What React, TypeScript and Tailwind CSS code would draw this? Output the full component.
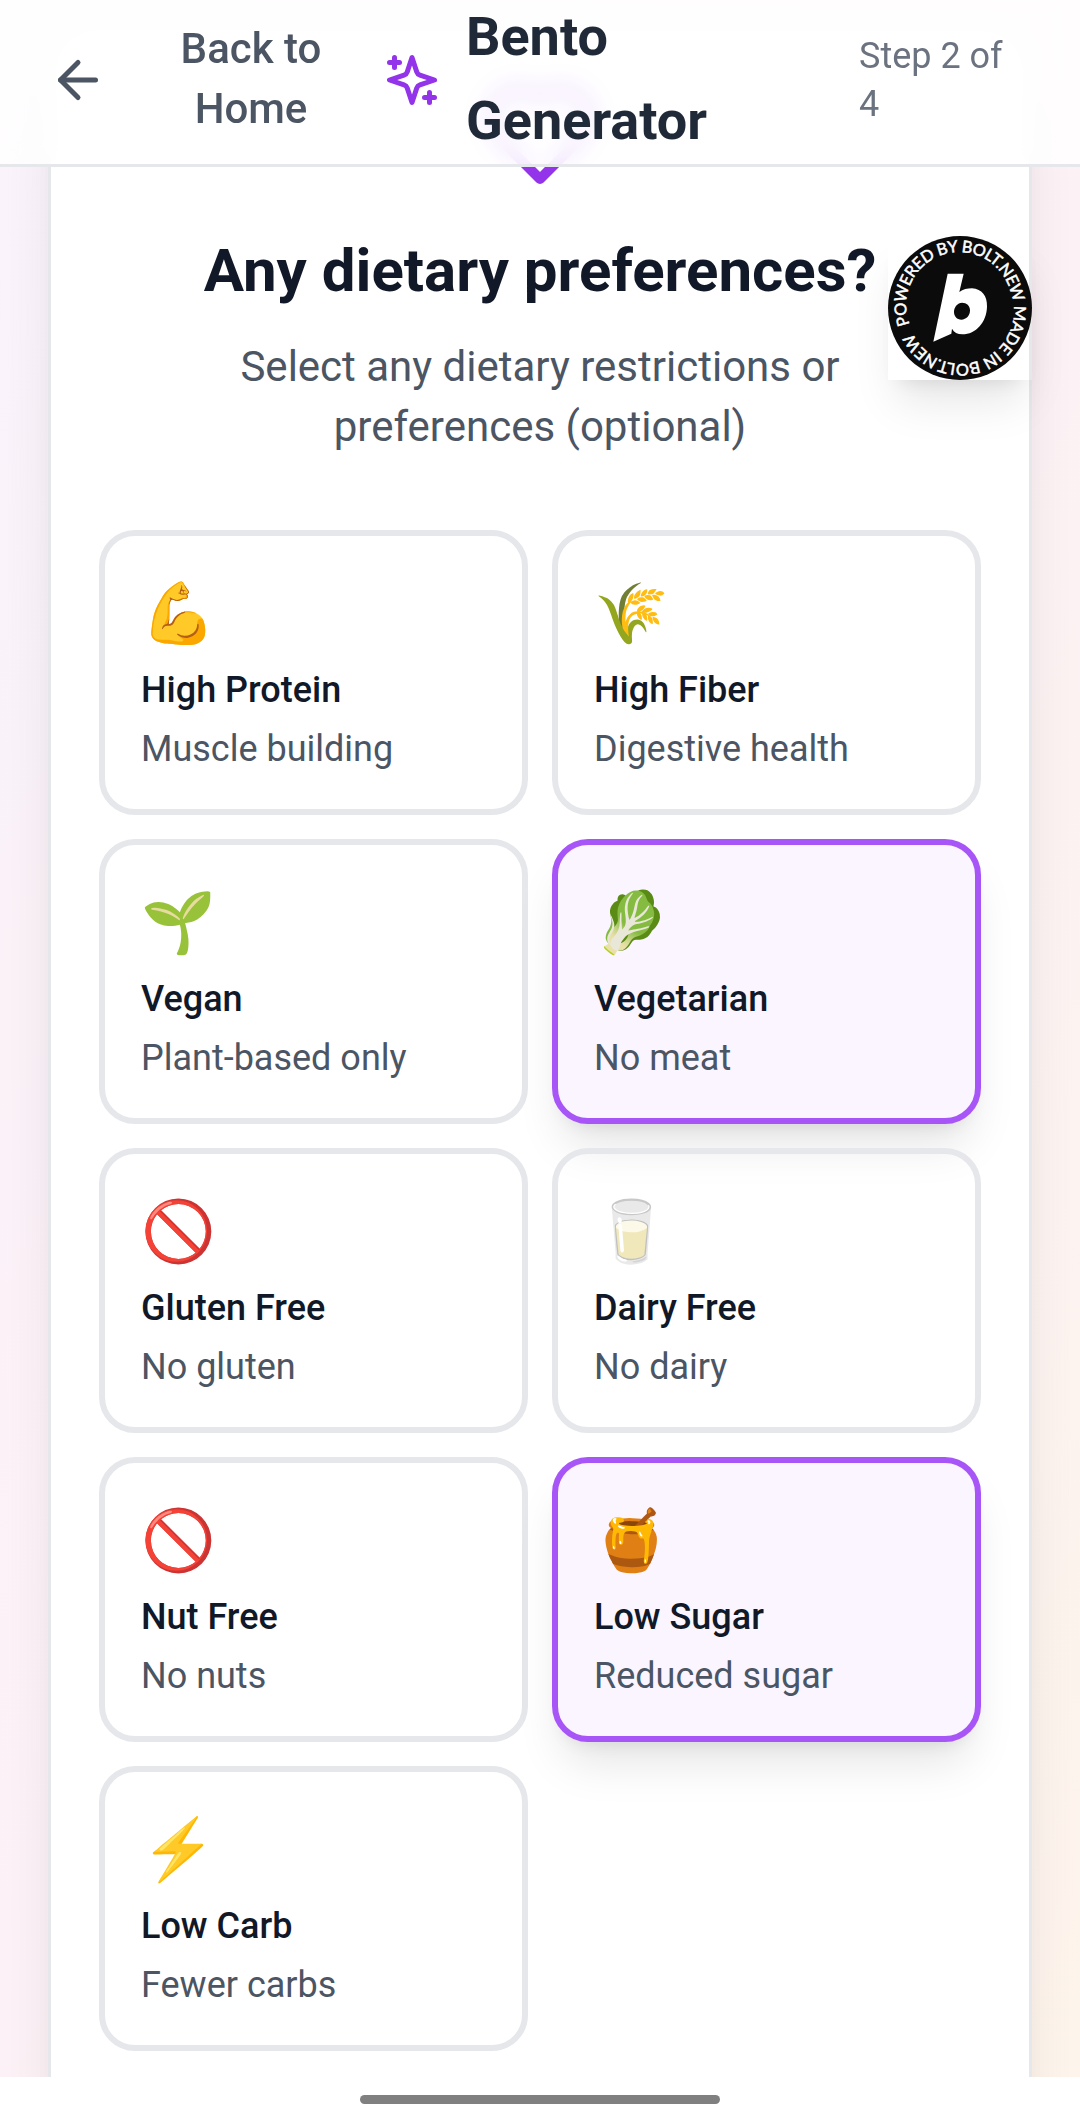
import { ArrowLeft } from "lucide-react";

type Preference = {
  id: string;
  emoji: string;
  label: string;
  description: string;
};

const PREFERENCES: Preference[] = [
  { id: "high-protein", emoji: "💪", label: "High Protein", description: "Muscle building" },
  { id: "high-fiber", emoji: "🌾", label: "High Fiber", description: "Digestive health" },
  { id: "vegan", emoji: "🌱", label: "Vegan", description: "Plant-based only" },
  { id: "vegetarian", emoji: "🥬", label: "Vegetarian", description: "No meat" },
  { id: "gluten-free", emoji: "🚫", label: "Gluten Free", description: "No gluten" },
  { id: "dairy-free", emoji: "🥛", label: "Dairy Free", description: "No dairy" },
  { id: "nut-free", emoji: "🚫", label: "Nut Free", description: "No nuts" },
  { id: "low-sugar", emoji: "🍯", label: "Low Sugar", description: "Reduced sugar" },
  { id: "low-carb", emoji: "⚡", label: "Low Carb", description: "Fewer carbs" },
];

const SELECTED = ["vegetarian", "low-sugar"];

const strokeProps = {
  viewBox: "0 0 24 24",
  fill: "none",
  stroke: "currentColor",
  strokeWidth: 2,
  strokeLinecap: "round" as const,
  strokeLinejoin: "round" as const,
};

const Sparkles = ({ className }: { className: string }) => (
  <svg {...strokeProps} className={className}>
    <path d="m12 3-1.912 5.813a2 2 0 0 1-1.275 1.275L3 12l5.813 1.912a2 2 0 0 1 1.275 1.275L12 21l1.912-5.813a2 2 0 0 1 1.275-1.275L21 12l-5.813-1.912a2 2 0 0 1-1.275-1.275L12 3Z" />
    <path d="M5 3v4" />
    <path d="M19 17v4" />
    <path d="M3 5h4" />
    <path d="M17 19h4" />
  </svg>
);

const Heart = ({ className }: { className: string }) => (
  <svg {...strokeProps} className={className}>
    <path d="M19 14c1.49-1.46 3-3.21 3-5.5A5.5 5.5 0 0 0 16.5 3c-1.76 0-3 .5-4.5 2-1.5-1.5-2.74-2-4.5-2A5.5 5.5 0 0 0 2 8.5c0 2.3 1.5 4.05 3 5.5l7 7Z" />
  </svg>
);

const BoltBadge = () => (
  <a
    href="#"
    className="absolute left-[888px] top-[236px] z-20 size-[144px] shadow-[0_30px_45px_-9px_rgba(0,0,0,0.1),0_12px_18px_-12px_rgba(0,0,0,0.1)]"
  >
    <svg viewBox="84 78 432 432" className="size-full">
      <defs>
        <path id="ring" d="M149 343A159 159 0 1 1 451 245A159 159 0 1 1 149 343" />
      </defs>
      <circle cx="300" cy="294" r="216" fill="#0b0b0b" />
      <text
        fill="#fff"
        stroke="#fff"
        strokeWidth="1.5"
        fontSize="49"
        letterSpacing="-1.2"
        style={{ fontFamily: "Lato, sans-serif" }}
      >
        <textPath href="#ring">POWERED BY BOLT.NEW MADE IN BOLT.NEW</textPath>
      </text>
      <path
        fill="#fff"
        fillRule="evenodd"
        d="M263 191H311L298 246C309 238 322 235 336 235C366 237 382 258 381 290C380 336 348 373 307 373C292 373 282 367 276 356L274 371L220 395ZM306 278C293 278 282 291 282 306C282 319 291 329 304 329C319 329 330 317 330 301C330 287 320 278 306 278Z"
      />
    </svg>
  </a>
);

const PreferenceCard = ({ item, selected }: { item: Preference; selected: boolean }) => (
  <button
    className={
      selected
        ? "h-[285px] rounded-[36px] border-6 border-[#a855f7] bg-[#faf5ff] p-9 text-left shadow-[0_30px_45px_-9px_rgba(0,0,0,0.1),0_12px_18px_-12px_rgba(0,0,0,0.1)]"
        : "h-[285px] rounded-[36px] border-6 border-[#e5e7eb] p-9 text-left"
    }
  >
    <div className="h-[82px] text-[60px] leading-[84px]">{item.emoji}</div>
    <div className="mt-3 text-[36px] leading-[48px] font-medium text-[#111827]">{item.label}</div>
    <div className="mt-[11px] text-[36px] leading-[48px] text-[#4b5563]">{item.description}</div>
  </button>
);

export default function App() {
  return (
    <div className="relative h-[2124px] w-[1080px] overflow-hidden bg-white font-[Roboto,'Noto_Color_Emoji',sans-serif]">
      <main className="h-[2077px] overflow-hidden bg-linear-to-br from-[#fbf4fc] via-[#fdf2f7] to-[#fef5ec] px-12 pt-[23px]">
        <section className="h-[2400px] rounded-[48px] border-3 border-[#e5e7eb] bg-white p-12 shadow-[0_60px_75px_-15px_rgba(0,0,0,0.1),0_24px_30px_-18px_rgba(0,0,0,0.1)]">
          <div className="flex flex-col items-center text-center">
            <Heart className="size-[120px] text-[#9333ea]" />
            <h2 className="mt-[35px] text-[60px] leading-[84px] font-bold text-[#111827]">
              Any dietary preferences?
            </h2>
            <p className="mt-[24px] w-[620px] text-[42px] leading-[60px] text-[#4b5563]">
              Select any dietary restrictions or preferences (optional)
            </p>
          </div>
          <div className="mt-[73px] grid grid-cols-2 gap-6">
            {PREFERENCES.map((item) => (
              <PreferenceCard key={item.id} item={item} selected={SELECTED.includes(item.id)} />
            ))}
          </div>
        </section>
      </main>

      <header className="absolute inset-x-0 top-0 z-10 flex h-[167px] items-center border-b-3 border-[#e5e7eb] bg-white/85 px-12 pb-[5px] backdrop-blur-[12px]">
        <button className="flex items-center gap-6 text-[#4b5563]">
          <ArrowLeft className="size-[60px]" />
          <span className="w-[238px] pb-[2px] text-[42px] leading-[60px] font-medium">
            Back to
            <br />
            Home
          </span>
        </button>
        <div className="ml-[12px] flex items-center gap-6">
          <Sparkles className="size-[60px] text-[#9333ea]" />
          <h1 className="w-[393px] pb-[2px] text-[54px] leading-[84px] font-bold text-[#1f2937]">
            Bento
            <br />
            Generator
          </h1>
        </div>
        <div className="w-[160px] text-[36px] leading-[48px] text-[#6b7280]">Step 2 of 4</div>
      </header>

      <BoltBadge />

      <div className="flex h-[47px] justify-center pt-[18px]">
        <div className="h-[9px] w-[360px] rounded-full bg-[#808080]" />
      </div>
    </div>
  );
}
